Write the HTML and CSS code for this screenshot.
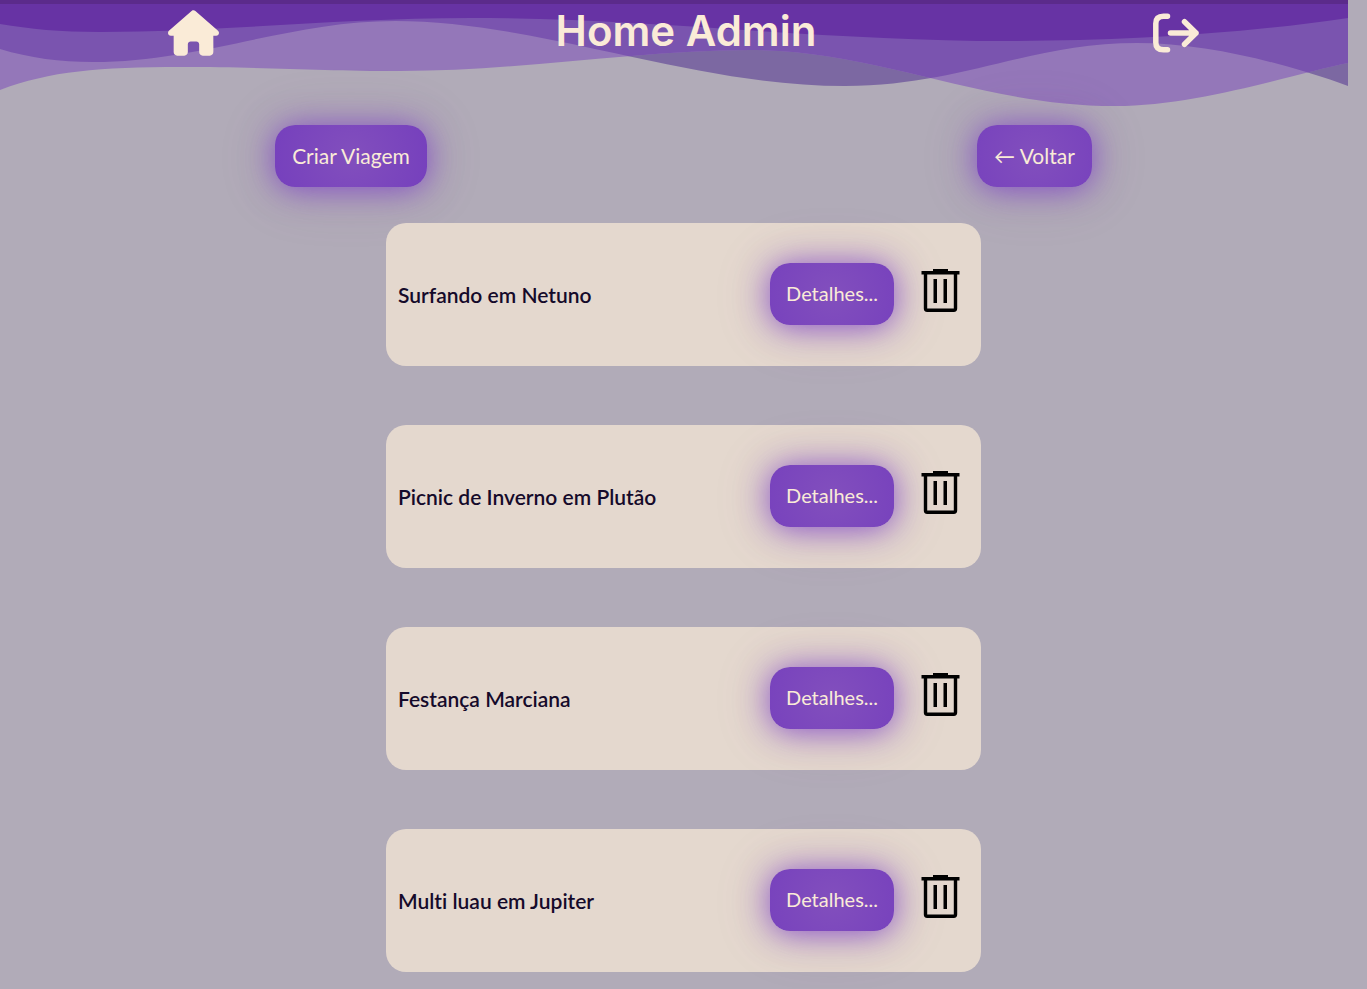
FILE: index.html
```html
<!DOCTYPE html>
<html lang="pt-BR">
<head>
<meta charset="utf-8">
<meta name="viewport" content="width=device-width, initial-scale=1">
<title>Home Admin</title>
<link rel="stylesheet" href="styles.css">
</head>
<body>
<svg class="waves" viewBox="0 0 1348 110" preserveAspectRatio="none" aria-hidden="true">
  <defs>
    <clipPath id="low"><path d="M0 0V90C50 71 100 67 180 67C270 67 320 71 400 71C520 71 640 50 750 50C880 50 980 106 1115 106C1200 106 1300 72 1348 63V0Z"/></clipPath>
  </defs>
  <path fill="#7c68a2" d="M0 0V49C30 58 60 62 93 62C200 62 290 21 395 21C540 21 690 86 845 86C960 86 1030 43 1137 43C1210 43 1290 65 1348 86V0Z"/>
  <path fill="#9477b9" d="M0 0V90C50 71 100 67 180 67C270 67 320 71 400 71C520 71 640 50 750 50C880 50 980 106 1115 106C1200 106 1300 72 1348 63V0Z"/>
  <path fill="#7a54af" clip-path="url(#low)" d="M0 0V49C30 58 60 62 93 62C200 62 290 21 395 21C540 21 690 86 845 86C960 86 1030 43 1137 43C1210 43 1290 65 1348 86V0Z"/>
  <path fill="#6733a4" d="M0 0V24C30 29 60 32 100 32C220 32 340 18 470 18C650 18 820 41 1010 41C1120 41 1240 34 1348 18V0Z"/>
  <path fill="#5b2b8b" d="M0 0H1348V4H0Z"/>
</svg>
<header class="header">
  <a class="icon-link" href="#" aria-label="Início">
    <svg width="51" height="46" viewBox="0 0 576 512" fill="currentColor"><path d="M575.800 255.500c0 18-15 32.100-32 32.100h-32l.7 160.200c0 2.700-.2 5.400-.5 8.100V472c0 22.100-17.900 40-40 40H392c-22.100 0-40-17.900-40-40v-88c0-17.700-14.300-32-32-32h-64c-17.700 0-32 14.300-32 32v88c0 22.100-17.900 40-40 40h-80c-22.100 0-40-17.900-40-40V287.600H32c-18 0-32-14-32-32.100 0-9 3-17 10-24L266.400 8c7-7 15-8 22-8s15 2 21 7l255.400 224.500c8 7 12 15 11 24z"/></svg>
  </a>
  <h1 class="title">Home Admin</h1>
  <button class="icon-link" type="button" aria-label="Sair">
    <svg width="46" height="40" viewBox="0 0 46 40" fill="none" stroke="currentColor" stroke-width="5.500" stroke-linecap="round" stroke-linejoin="round"><path d="M14.500 3.200H10.500Q2.800 3.200 2.800 10.500V29.500Q2.800 36.800 10.500 36.800H14.500M17.500 20H43M31.500 8.700L43 20L31.500 31.300"/></svg>
  </button>
</header>
<main>
  <nav class="actions">
    <button class="btn" type="button">Criar Viagem</button>
    <button class="btn" type="button">← Voltar</button>
  </nav>
  <ul class="trips">
    <li class="trip"><h2 class="name">Surfando em Netuno</h2><button class="btn details" type="button">Detalhes...</button>
      <button class="delete" type="button" aria-label="Excluir Surfando em Netuno"><svg width="39" height="44" viewBox="0 0 39 44"><use href="#trash"/></svg></button></li>
    <li class="trip"><h2 class="name">Picnic de Inverno em Plutão</h2><button class="btn details" type="button">Detalhes...</button>
      <button class="delete" type="button" aria-label="Excluir Picnic de Inverno em Plutão"><svg width="39" height="44" viewBox="0 0 39 44"><use href="#trash"/></svg></button></li>
    <li class="trip"><h2 class="name">Festança Marciana</h2><button class="btn details" type="button">Detalhes...</button>
      <button class="delete" type="button" aria-label="Excluir Festança Marciana"><svg width="39" height="44" viewBox="0 0 39 44"><use href="#trash"/></svg></button></li>
    <li class="trip"><h2 class="name">Multi luau em Jupiter</h2><button class="btn details" type="button">Detalhes...</button>
      <button class="delete" type="button" aria-label="Excluir Multi luau em Jupiter"><svg width="39" height="44" viewBox="0 0 39 44"><use href="#trash"/></svg></button></li>
  </ul>
</main>
<svg class="sprite" aria-hidden="true"><symbol id="trash" viewBox="0 0 39 44"><path d="M12 1H27V3H38.500V6.500H.500V3H12ZM12.500 11H16V35H12.500ZM22.500 11H26V35H22.500Z"/><path d="M4.500 5V40.500Q4.500 42.200 6.200 42.200H32.800Q34.500 42.200 34.500 40.500V5" fill="none" stroke="#000" stroke-width="3.400"/></symbol></svg>
</body>
</html>
```

FILE: styles.css
```css
* { box-sizing: border-box; }
body {
  margin: 0;
  background: #b1abb8;
  color: #150a2a;
  font-family: Lato, "DejaVu Sans", sans-serif;
  font-size: 21px;
  font-variant-ligatures: none;
}
button { font: inherit; border: 0; cursor: pointer; }
.waves {
  position: absolute;
  z-index: -1;
  top: 0;
  left: 0;
  width: calc(100% - 19px);
  height: 110px;
}
.header {
  display: flex;
  justify-content: space-around;
  align-items: center;
  height: 65px;
}
.icon-link {
  display: flex;
  padding: 0;
  background: none;
  color: #faebd7;
}
.title {
  margin: 0 0 4px;
  color: #faebd7;
  font-family: Inter, sans-serif;
  font-size: 42px;
  line-height: 60px;
  font-weight: 600;
}
.actions {
  display: flex;
  justify-content: space-around;
  padding: 60px 0 36px;
}
.btn {
  height: 62px;
  padding: 0 17px 2px;
  border-radius: 20px;
  background: radial-gradient(circle at center, #824fbd, #7640bd 80px);
  box-shadow: 0 2px 32px rgba(122, 62, 200, 0.85), 0 2px 60px rgba(150, 90, 150, 0.2);
  color: #faebd7;
  white-space: nowrap;
}
.details {
  padding: 0 16px 2px;
  font-size: 20px;
}
.trips {
  display: grid;
  gap: 59px;
  width: 90%;
  max-width: 595px;
  margin: 0 auto;
  padding: 0 0 16px;
  list-style: none;
}
.trip {
  display: flex;
  align-items: center;
  min-height: 143px;
  padding: 0 21px 1px 12px;
  border-radius: 20px;
  background: #e4d8ce;
}
.name {
  flex: 1;
  margin: 0;
  font-size: 21px;
  font-weight: 600;
}
.delete {
  display: flex;
  margin-left: 27px;
  padding: 0 0 8px;
  background: none;
}
.sprite {
  position: absolute;
  width: 0;
  height: 0;
}
```
